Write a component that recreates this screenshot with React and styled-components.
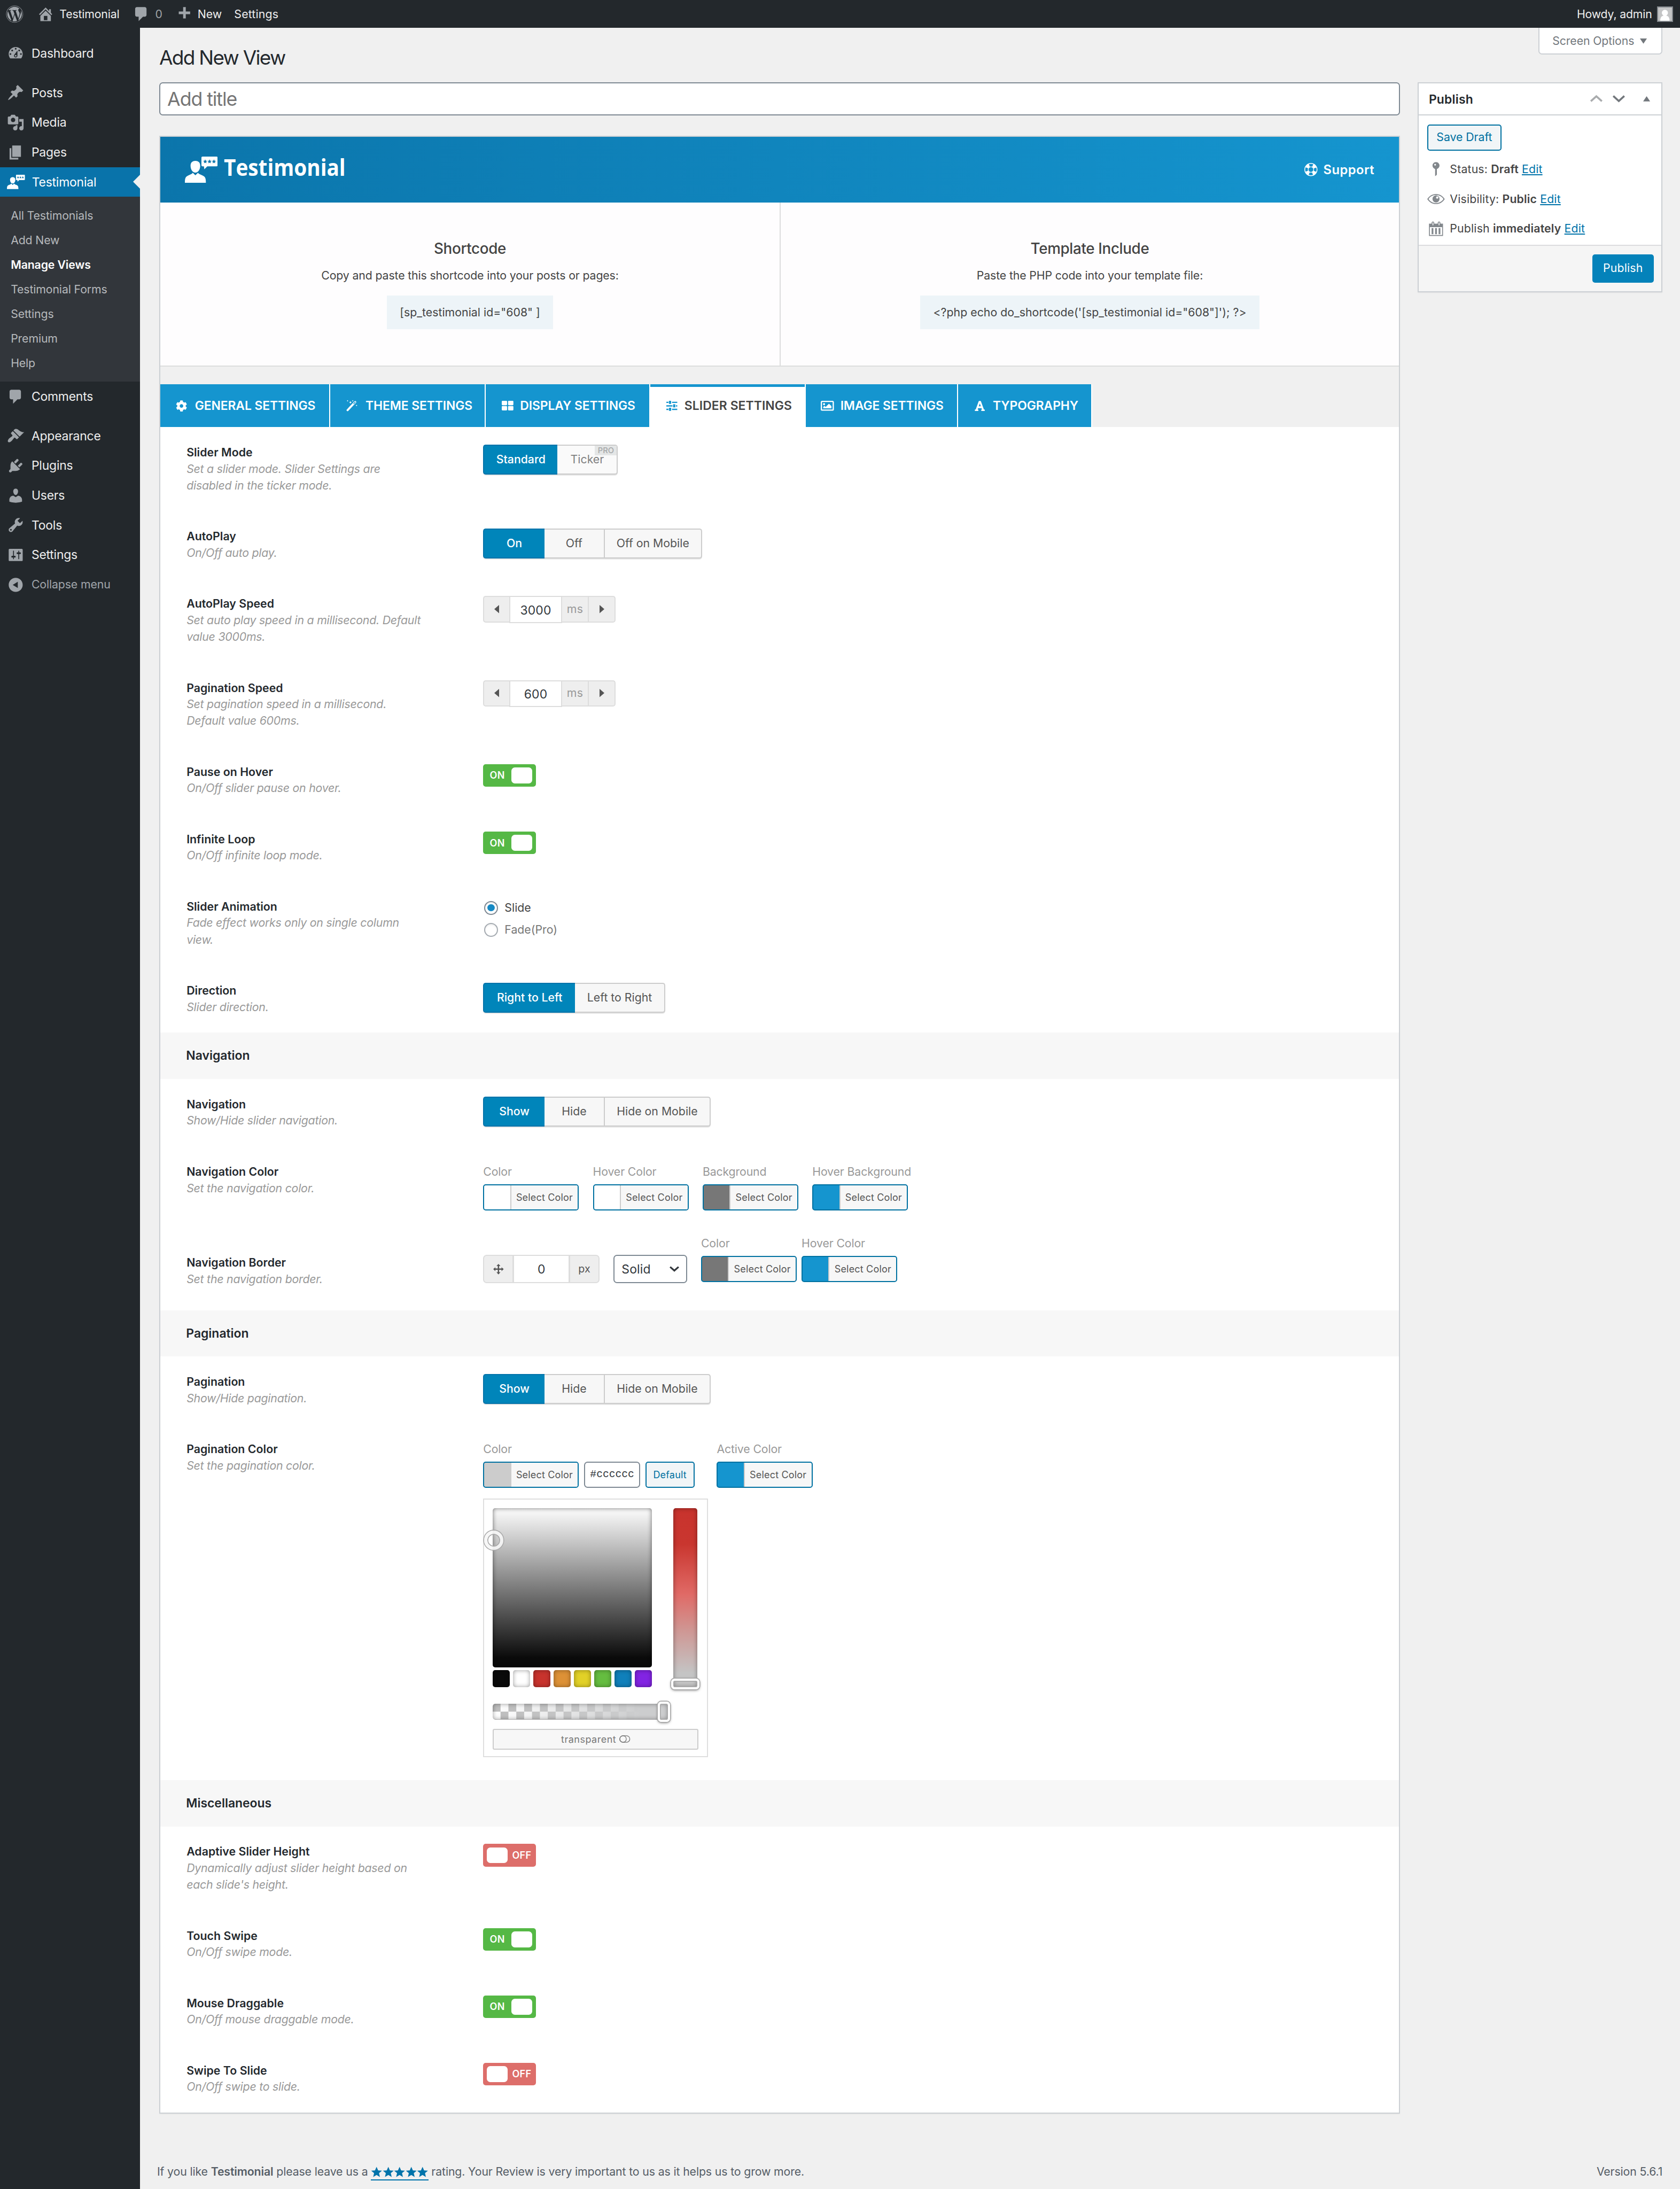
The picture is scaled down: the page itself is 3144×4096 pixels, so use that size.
import React from "react";
import styled, { createGlobalStyle, css } from "styled-components";
import { FaWordpress, FaCog, FaRegImage, FaFont } from "react-icons/fa";

/* 1rem equals ten design pixels at the scale of the admin screen. */
const GlobalStyle = createGlobalStyle`
  html { font-size: 16.375px; }
  *, *::before, *::after { box-sizing: border-box; }
  body {
    margin: 0;
    background: #f0f0f0;
    color: #444;
    font-family: Inter, "Liberation Sans", sans-serif;
    font-size: 1.3rem;
    line-height: 1.4;
    letter-spacing: -0.006em;
    overflow: hidden;
  }
  h1, h2, h3, h4, p, ul { margin: 0; padding: 0; font-weight: inherit; font-size: inherit; }
  ul { list-style: none; }
  button, input, select { font: inherit; letter-spacing: inherit; }
  svg { display: block; }
`;

const line = "0.125rem solid";

/* ---------- icons ---------- */

const paths = {
  home: "M16 8.5l1.53 1.53-1.06 1.06L10 4.6l-6.47 6.49-1.06-1.06L10 2.5l4 4v-2h2v4zm-6-2.46l6 5.99V18H4v-5.97zM12 17v-5H8v5h4z",
  comment: "M5 2h9c1.1 0 2 .9 2 2v7c0 1.1-.9 2-2 2h-2l-5 5v-5H5c-1.1 0-2-.9-2-2V4c0-1.1.9-2 2-2z",
  plus: "M17 7v3h-5v5H9v-5H4V7h5V2h3v5h5z",
  dashboard:
    "M3.76 16h12.48c1.1-1.37 1.76-3.11 1.76-5 0-4.42-3.58-8-8-8s-8 3.58-8 8c0 1.89.66 3.63 1.76 5zM10 4c.55 0 1 .45 1 1s-.45 1-1 1-1-.45-1-1 .45-1 1-1zM6 6c.55 0 1 .45 1 1s-.45 1-1 1-1-.45-1-1 .45-1 1-1zm8 0c.55 0 1 .45 1 1s-.45 1-1 1-1-.45-1-1 .45-1 1-1zm-5.37 5.55L12 7v6c0 1.1-.9 2-2 2s-2-.9-2-2c0-.57.24-1.08.63-1.45zM4 10c.55 0 1 .45 1 1s-.45 1-1 1-1-.45-1-1 .45-1 1-1zm12 0c.55 0 1 .45 1 1s-.45 1-1 1-1-.45-1-1 .45-1 1-1zm-5 3c0-.55-.45-1-1-1s-1 .45-1 1 .45 1 1 1 1-.45 1-1z",
  post: "M10.44 3.02l1.82-1.82 6.36 6.35-1.83 1.82c-1.05-.68-2.48-.57-3.41.36l-.75.75c-.92.93-1.04 2.35-.35 3.41l-1.83 1.82-2.41-2.41-2.8 2.79c-.42.42-3.38 2.71-3.8 2.29s1.86-3.39 2.28-3.81l2.79-2.79L4.1 9.36l1.83-1.82c1.05.69 2.48.57 3.4-.36l.75-.75c.93-.92 1.05-2.35.36-3.41z",
  media:
    "M13 11V4c0-.55-.45-1-1-1h-1.67L9 1H5L3.67 3H2c-.55 0-1 .45-1 1v7c0 .55.45 1 1 1h10c.55 0 1-.45 1-1zM7 4.5c1.38 0 2.5 1.12 2.5 2.5S8.38 9.5 7 9.5 4.5 8.38 4.5 7 5.62 4.5 7 4.5zM14 6h5v10.5c0 1.38-1.12 2.5-2.5 2.5S14 17.88 14 16.5s1.12-2.5 2.5-2.5c.17 0 .34.02.5.05V9h-3V6zm-4 8.05V13h2v3.5c0 1.38-1.12 2.5-2.5 2.5S7 17.88 7 16.5 8.12 14 9.5 14c.17 0 .34.02.5.05z",
  page: "M6 15V2h10v13H6zm-1 1h8v2H3V5h2v11z",
  appearance:
    "M14.48 11.06L7.41 3.99l1.5-1.5c.5-.56 2.3-.47 3.51.32 1.21.8 1.43 1.28 2.91 2.1 1.18.64 2.45 1.26 4.45.85zm-.71.71L6.7 4.7 4.93 6.47c-.39.39-.39 1.02 0 1.41l1.06 1.06c.39.39.39 1.03 0 1.42-.6.6-1.43 1.11-2.21 1.69-.35.26-.7.53-1.01.84C1.43 14.23.4 16.08 1.4 17.07c.99 1 2.84-.03 4.18-1.36.31-.31.58-.66.85-1.02.57-.78 1.08-1.61 1.69-2.21.39-.39 1.02-.39 1.41 0l1.06 1.06c.39.39 1.02.39 1.41 0z",
  plugins:
    "M13.11 4.36L9.87 7.6 8 5.73l3.24-3.24c.35-.34 1.05-.2 1.56.32.52.51.66 1.21.31 1.55zm-8 1.77l.91-1.12 9.01 9.01-1.19.84c-.71.71-2.63 1.16-3.82 1.16H6.14L4.9 17.26c-.59.59-1.54.59-2.12 0-.59-.58-.59-1.53 0-2.12l1.24-1.24v-3.88c0-1.13.4-3.19 1.09-3.89zm7.26 3.97l3.24-3.24c.34-.35 1.04-.21 1.55.31.52.51.66 1.21.31 1.55l-3.24 3.25z",
  users:
    "M10 9.25c-2.27 0-2.73-3.44-2.73-3.44C7 4.02 7.82 2 9.97 2c2.16 0 2.98 2.02 2.71 3.81 0 0-.41 3.44-2.68 3.44zm0 2.57L12.72 10c2.39 0 4.52 2.33 4.52 4.53v2.49s-3.65 1.13-7.24 1.13c-3.65 0-7.24-1.13-7.24-1.13v-2.49c0-2.25 1.94-4.48 4.47-4.48z",
  tools:
    "M16.68 9.77c-1.34 1.34-3.3 1.67-4.95.99l-5.41 6.52c-.99.99-2.59.99-3.58 0s-.99-2.59 0-3.57l6.52-5.42c-.68-1.65-.35-3.61.99-4.95 1.28-1.28 3.12-1.62 4.72-1.06l-2.89 2.89 2.82 2.82 2.86-2.87c.53 1.58.18 3.39-1.08 4.65zM3.81 16.21c.4.39 1.04.39 1.43 0 .4-.4.4-1.04 0-1.43-.39-.4-1.03-.4-1.43 0-.39.39-.39 1.03 0 1.43z",
  settings:
    "M18 16V4c0-.55-.45-1-1-1H3c-.55 0-1 .45-1 1v12c0 .55.45 1 1 1h14c.55 0 1-.45 1-1zM8 11h1c.55 0 1 .45 1 1s-.45 1-1 1H8v1.5c0 .28-.22.5-.5.5s-.5-.22-.5-.5V13H6c-.55 0-1-.45-1-1s.45-1 1-1h1V5.5c0-.28.22-.5.5-.5s.5.22.5.5V11zm5-2h-1c-.55 0-1-.45-1-1s.45-1 1-1h1V5.5c0-.28.22-.5.5-.5s.5.22.5.5V7h1c.55 0 1 .45 1 1s-.45 1-1 1h-1v5.5c0 .28-.22.5-.5.5s-.5-.22-.5-.5V9z",
  collapse: "M10 2c4.42 0 8 3.58 8 8s-3.58 8-8 8-8-3.58-8-8 3.58-8 8-8zM12.4 13.6V6.4L6.6 10z",
  status:
    "M14 6c0 1.86-1.28 3.41-3 3.86V16c0 1-2 2-2 2V9.86c-1.72-.45-3-2-3-3.86 0-2.21 1.79-4 4-4s4 1.79 4 4zM8 5c0 .55.45 1 1 1s1-.45 1-1-.45-1-1-1-1 .45-1 1z",
  visibility:
    "M10 4.2C5.8 4.2 2.3 6.5 0 10c2.3 3.5 5.8 5.8 10 5.8s7.7-2.3 10-5.8C17.7 6.5 14.2 4.2 10 4.2zM10 14.6C6.6 14.6 3.5 12.9 1.5 10 3.5 7.1 6.6 5.4 10 5.4s6.5 1.7 8.5 4.6c-2 2.9-5.1 4.6-8.5 4.6zM10 5.8a4 4.1 0 1 0 .01 0zM11.4 7a1.3 1.3 0 1 1-.01 0z",
  calendar:
    "M15 4h3v14H2V4h3V3c0-.83.67-1.5 1.5-1.5S8 2.17 8 3v1h4V3c0-.83.67-1.5 1.5-1.5S15 2.17 15 3v1zM6 3v2.5c0 .28.22.5.5.5s.5-.22.5-.5V3c0-.28-.22-.5-.5-.5S6 2.72 6 3zm7 0v2.5c0 .28.22.5.5.5s.5-.22.5-.5V3c0-.28-.22-.5-.5-.5s-.5.22-.5.5zm4 14V8H3v9h14zM7 16V9H5v7h2zm4 0V9H9v7h2zm4 0V9h-2v7h2z",
};

const DashSvg = styled.svg`
  width: 2rem;
  height: 2rem;
  fill: currentColor;
  flex: none;
`;

const Dash = ({ name }) => (
  <DashSvg viewBox="0 0 20 20">
    <path d={paths[name]} fillRule="evenodd" />
  </DashSvg>
);

const star = "M0-2.4L.7-.8 2.4-.7 1.1.4 1.5 2.1 0 1.2-1.5 2.1-1.1.4-2.4-.7-.7-.8z";

const MarkSvg = styled.svg`
  width: ${(p) => p.$w};
  height: auto;
  flex: none;
`;

const TestimonialMark = ({ width, ink }) => (
  <MarkSvg $w={width} viewBox="0 0 37.5 30">
    <g fill="#fff">
      <path d="M12 4.9c4 0 5.7 2.6 5.5 6.2C17.3 15 15 18.300 12 18.3S6.7 15 6.5 11.1C6.3 7.5 8 4.9 12 4.9z" />
      <path d="M0 30C0 24.500.8 22.7 4.3 21.3 6.8 20.4 8.2 19.8 9 18.5L12 21.3 15 18.5c.8 1.3 2.2 1.9 4.7 2.8C23.2 22.7 24 24.5 24 30z" />
      <path d="M20.2 0h16c.8 0 1.3.5 1.3 1.3v8.500c0 .8-.5 1.3-1.3 1.3H25.6L22.2 14.5 21.8 11.1H20.2c-.8 0-1.3-.5-1.3-1.3V1.300C18.900.5 19.400 0 20.200 0z" />
    </g>
    <g fill={ink}>
      <path d={star} transform="translate(23.2 5.6)" />
      <path d={star} transform="translate(28.2 5.6)" />
      <path d={star} transform="translate(33.2 5.6)" />
    </g>
  </MarkSvg>
);

const SmallSvg = styled.svg`
  width: ${(p) => p.$w}rem;
  height: ${(p) => p.$h}rem;
  flex: none;
  overflow: visible;
`;

const Triangle = ({ dir, w, h }) => {
  const d = {
    down: "M0 0H10L5 10z",
    up: "M0 10H10L5 0z",
    left: "M10 0V10L0 5z",
    right: "M0 0V10L10 5z",
  }[dir];
  return (
    <SmallSvg $w={w} $h={h} viewBox="0 0 10 10" preserveAspectRatio="none" fill="currentColor">
      <path d={d} />
    </SmallSvg>
  );
};

const Chevron = ({ up, w, h, stroke }) => (
  <SmallSvg $w={w} $h={h} viewBox={`0 0 ${w * 10} ${h * 10}`} fill="none" stroke="currentColor" strokeWidth={stroke}>
    <path d={up ? `M.7 ${h * 10 - 1}L${w * 5} 1.3 ${w * 10 - 0.7} ${h * 10 - 1}` : `M.7 1L${w * 5} ${h * 10 - 1.3} ${w * 10 - 0.7} 1`} />
  </SmallSvg>
);

const LifeRing = () => (
  <SmallSvg $w={1.5} $h={1.5} viewBox="0 0 30 30" fill="none" stroke="#fff">
    <circle cx="15" cy="15" r="14" strokeWidth="1.8" />
    <circle cx="15" cy="15" r="6.3" strokeWidth="1.6" />
    <circle cx="15" cy="15" r="10" strokeWidth="8" strokeDasharray="7.85 7.858" strokeDashoffset="-3.93" />
  </SmallSvg>
);

const SlidersIcon = () => (
  <SmallSvg $w={1.25} $h={1.15} viewBox="0 0 25 23" fill="#1595cf">
    <path d="M0 2h5v3H0zM13 2h12v3H13zM6 0h5v7H6zM0 10h14v3H0zM22 10h3v3h-3zM15.5 8h5v7h-5zM0 18h5v3H0zM13 18h12v3H13zM6 16h5v7H6z" />
  </SmallSvg>
);

const WandIcon = () => (
  <SmallSvg $w={1.25} $h={1.25} viewBox="0 0 25 25">
    <path d="M3 22.5L20.500 4" stroke="#fff" strokeWidth="4.6" strokeLinecap="round" />
    <path d="M17 7.800L20.300 4.300" stroke="#1595cf" strokeWidth="1.8" strokeLinecap="round" />
    <g fill="#fff">
      <path d="M9.6 1.600l.9 2.300 2.300.9-2.300.9-.9 2.300-.9-2.300L6.400 4.800l2.300-.9z" />
      <path d="M3-.6l.6 1.300 1.300.6-1.300.6L3 3.200l-.6-1.300-1.300-.6L2.400.7z" />
      <path d="M14.800-.6l.6 1.300 1.300.6-1.300.6-.6 1.300-.6-1.300-1.300-.6 1.300-.6z" />
      <path d="M23.500 10l.6 1.300 1.300.6-1.300.6-.6 1.300-.6-1.300-1.300-.6 1.300-.6z" />
    </g>
  </SmallSvg>
);

const TilesIcon = () => (
  <SmallSvg $w={1.33} $h={1.1} viewBox="0 0 26.6 22" fill="#fff">
    <rect width="12.200" height="10" rx="1.800" />
    <rect x="14.400" width="12.200" height="10" rx="1.800" />
    <rect y="12" width="12.200" height="10" rx="1.800" />
    <rect x="14.400" y="12" width="12.200" height="10" rx="1.800" />
  </SmallSvg>
);

const MoveIcon = () => (
  <SmallSvg $w={1.2} $h={1.2} viewBox="0 0 24 24" fill="currentColor">
    <path d="M12 0l4.500 5h-3v5.500H19v-3l5 4.500-5 4.500v-3h-5.500V19h3L12 24l-4.500-5h3v-5.500H5v3L0 12l5-4.500v3h5.500V5h-3z" />
  </SmallSvg>
);

/* ---------- admin bar ---------- */

const AdminBar = styled.header`
  height: 3.2rem;
  background: #23282c;
  color: #eee;
  display: flex;
  align-items: center;
  padding: 0.05rem 0.8rem 0 0.7rem;
`;

const BarItem = styled.a`
  display: flex;
  align-items: center;
  gap: ${(p) => p.$gap || 0.6}rem;
  margin-left: ${(p) => p.$ml || 0}rem;
  color: ${(p) => (p.$dim ? "#9da1a5" : "#eee")};
  letter-spacing: ${(p) => p.$ls || "-0.008em"};
  svg { color: #a0a5aa; }
`;

const WpLogo = styled(FaWordpress)`
  width: 2rem;
  height: 2rem;
`;

const Spacer = styled.div`
  flex: 1;
`;

const Avatar = styled.svg`
  width: 1.8rem;
  height: 1.8rem;
  border: ${line} #82878c;
  background: #c4c5c6;
`;

/* ---------- side menu ---------- */

const Frame = styled.div`
  width: 192rem;
  height: 100vh;
  display: flex;
  flex-direction: column;
`;

const Body = styled.div`
  flex: 1;
  display: flex;
  min-height: 0;
`;

const Side = styled.nav`
  width: 16rem;
  background: #23282c;
  padding-top: 1.2rem;
  flex: none;
`;

const MenuItem = styled.a`
  position: relative;
  display: flex;
  align-items: center;
  height: 3.4rem;
  padding-left: 0.8rem;
  gap: 0.8rem;
  font-size: 1.4rem;
  margin-top: ${(p) => (p.$apart ? "1.1rem" : 0)};
  color: ${(p) => (p.$dim ? "#a0a5aa" : "#eee")};
  letter-spacing: -0.009em;
  ${(p) => p.$dim && css`font-size: 1.3rem; letter-spacing: -0.006em;`}
  svg { color: #a0a5aa; }
  ${(p) =>
    p.$active &&
    css`
      background: #0973aa;
      color: #fff;
      &::after {
        content: "";
        position: absolute;
        right: 0;
        top: 0.9rem;
        border: 0.8rem solid transparent;
        border-left: 0;
        border-right-color: #f0f0f0;
      }
    `}
`;

const SubMenu = styled.ul`
  background: #32363b;
  padding: 0.7rem 0 0.72rem;
`;

const SubItem = styled.li`
  height: 2.814rem;
  line-height: 2.814rem;
  padding-left: 1.23rem;
  color: ${(p) => (p.$current ? "#fff" : "#b6b9bc")};
  font-weight: ${(p) => (p.$current ? 600 : 400)};
`;

/* ---------- page ---------- */

const Page = styled.div`
  flex: 1;
  display: flex;
  flex-direction: column;
  padding: 0 2rem 0 2.2rem;
`;

const PageTop = styled.div`
  height: 6.2rem;
  display: flex;
  justify-content: space-between;
  align-items: flex-start;
`;

const PageTitle = styled.h1`
  font-size: 2.3rem;
  line-height: 3rem;
  padding-top: 1.85rem;
  color: #23282d;
  letter-spacing: -0.047em;
  font-size: 2.26rem;
`;

const ScreenOptions = styled.button`
  display: flex;
  align-items: center;
  justify-content: space-between;
  width: 14.2rem;
  height: 3rem;
  padding: 0.15rem 1.65rem 0 1.5rem;
  border: ${line} #ccd0d4;
  border-top: 0;
  border-radius: 0 0 0.4rem 0.4rem;
  background: #fff;
  color: #72777c;
`;

const Columns = styled.div`
  display: flex;
  gap: 2rem;
  align-items: flex-start;
`;

const Main = styled.main`
  width: 141.8rem;
`;

const TitleInput = styled.input`
  display: block;
  width: 100%;
  height: 3.8rem;
  border: ${line} #7e8993;
  border-radius: 0.4rem;
  background: #fff;
  padding: 0 0.8rem;
  font-size: 2.18rem;
  letter-spacing: -0.03em;
  &::placeholder { color: #757575; opacity: 1; }
`;

/* ---------- publish box ---------- */

const PublishBox = styled.aside`
  width: 28rem;
  height: 24rem;
  background: #fff;
  border: ${line} #ccd0d4;
  box-shadow: 0 0.1rem 0.1rem rgba(0, 0, 0, 0.04);
  display: flex;
  flex-direction: column;
`;

const BoxHead = styled.div`
  height: 3.68rem;
  border-bottom: ${line} #ccd0d4;
  display: flex;
  align-items: center;
  padding: 0.15rem 1.3rem 0 1.17rem;
  color: #72777c;
`;

const BoxTitle = styled.h2`
  flex: 1;
  font-size: 1.4rem;
  font-weight: 600;
  color: #23282d;
  letter-spacing: 0.009em;
`;

const Handle = styled.span`
  margin-left: ${(p) => p.$ml}rem;
  color: ${(p) => (p.$faint ? "#a9abad" : "#72777c")};
  margin-bottom: 0.2rem;
`;

const BoxBody = styled.div`
  flex: 1;
  padding: 1rem 0.98rem 0;
`;

const OutlineButton = styled.button`
  display: inline-flex;
  align-items: center;
  justify-content: center;
  width: ${(p) => p.$w}rem;
  height: 3rem;
  padding: 0;
  border: ${line} #0071a1;
  border-radius: 0.3rem;
  background: #f1f5f7;
  color: #0071a1;
  font-size: ${(p) => p.$fs || 1.3}rem;
  letter-spacing: ${(p) => (p.$fs ? "0.011em" : "-0.002em")};
`;

const MetaList = styled.ul`
  padding-top: 0.45rem;
`;

const MetaRow = styled.li`
  height: 3.4rem;
  display: flex;
  align-items: center;
  gap: 0.6rem;
  white-space: pre;
  letter-spacing: 0.008em;
  svg { color: #82878c; }
  a { color: #0073aa; text-decoration: underline; text-underline-offset: 0.15rem; }
  b { font-weight: 600; }
`;

const BoxFoot = styled.div`
  height: 5.3rem;
  border-top: ${line} #dcdcde;
  background: #f5f5f5;
  padding: 0.98rem 0.9rem;
  display: flex;
  justify-content: flex-end;
`;

const PrimaryButton = styled.button`
  width: 7rem;
  height: 3.2rem;
  border: 0;
  border-radius: 0.3rem;
  background: #0482ba;
  color: #fff;
  padding: 0;
  letter-spacing: 0.008em;
`;

/* ---------- settings panel ---------- */

const Panel = styled.section`
  margin-top: 2.3rem;
  border: ${line} #ccd0d4;
  background: #fff;
  box-shadow: 0 0.1rem 0.1rem rgba(0, 0, 0, 0.04);
`;

const Banner = styled.div`
  height: 7.5rem;
  display: flex;
  align-items: center;
  justify-content: space-between;
  padding: 0 2.8rem;
  background: linear-gradient(to right, #0b75ab, #1595cf);
  color: #fff;
`;

const Brand = styled.div`
  display: flex;
  align-items: center;
  gap: 0.7rem;
`;

const BrandName = styled.span`
  font-family: "Open Sans", "Noto Sans", sans-serif;
  font-weight: 700;
  font-size: 2.62rem;
  line-height: 3rem;
  margin-bottom: 0.6rem;
  letter-spacing: 0;
  transform: scaleX(0.903);
  transform-origin: 0 50%;
`;

const Support = styled.a`
  display: flex;
  align-items: center;
  gap: 0.7rem;
  font-size: 1.45rem;
  font-weight: 600;
  letter-spacing: 0.02em;
`;

const Includes = styled.div`
  display: grid;
  grid-template-columns: 1fr 1fr;
  height: 18.8rem;
  background: #fefdfe;
  border-bottom: ${line} #dcdddd;
`;

const Include = styled.div`
  display: flex;
  flex-direction: column;
  align-items: center;
  padding-top: 4.1rem;
  & + & { border-left: ${line} #dcdddd; }
`;

const IncludeTitle = styled.h3`
  font-size: 1.7rem;
  font-weight: 500;
  line-height: 2.4rem;
  letter-spacing: -0.013em;
`;

const IncludeText = styled.p`
  line-height: 1.8rem;
  margin-top: 0.98rem;
`;

const Code = styled.div`
  height: 3.8rem;
  line-height: 3.85rem;
  margin-top: 1.4rem;
  padding: 0 1.5rem;
  background: #edf4f8;
  letter-spacing: 0.0014em;
`;

const Tabs = styled.div`
  display: flex;
  background: #f0f0f0;
  padding-top: 2rem;
`;

const Tab = styled.a`
  display: flex;
  align-items: center;
  width: ${(p) => p.$w}rem;
  height: 4.9rem;
  padding-left: ${(p) => p.$pl}rem;
  border-right: ${line} #fff;
  background: ${(p) => (p.$active ? "#fff" : "#1595cf")};
  color: ${(p) => (p.$active ? "#444" : "#fff")};
  font-size: 1.4rem;
  font-weight: 600;
  letter-spacing: ${(p) => (p.$active ? "0.003em" : "-0.005em")};
  white-space: nowrap;
  text-transform: uppercase;
  ${(p) => p.$active && css`box-shadow: inset 0 0.3rem 0 #1595cf;`}
`;

const TabIcon = styled.span`
  display: flex;
  width: ${(p) => p.$w}rem;
  flex: none;
  svg { flex: none; }
`;

const SectionHead = styled.h3`
  height: 5.3rem;
  line-height: 5.3rem;
  padding-left: 2.95rem;
  background: #f7f7f7;
  color: #23282d;
  font-size: 1.4rem;
  font-weight: 600;
  letter-spacing: 0;
`;

const FieldRow = styled.div`
  display: flex;
  align-items: flex-start;
  padding: ${(p) => p.$pad || "2rem 3rem"};
`;

const FieldLabel = styled.div`
  width: 33.9rem;
  flex: none;
  padding-top: ${(p) => p.$drop || 0}rem;
  white-space: nowrap;
`;

const FieldTitle = styled.h4`
  line-height: 1.8rem;
  font-weight: 600;
  color: #23282d;
  letter-spacing: 0.002em;
`;

const FieldDesc = styled.p`
  line-height: 1.9rem;
  font-style: italic;
  color: #999;
  letter-spacing: -0.01em;
`;

function Field({ title, desc, pad, drop, children }) {
  return (
    <FieldRow $pad={pad}>
      <FieldLabel $drop={drop}>
        <FieldTitle>{title}</FieldTitle>
        {desc.map((d) => (
          <FieldDesc key={d}>{d}</FieldDesc>
        ))}
      </FieldLabel>
      {children}
    </FieldRow>
  );
}

const Group = styled.div`
  display: flex;
  height: 3.4rem;
`;

const GroupButton = styled.button`
  position: relative;
  width: ${(p) => p.$w}rem;
  padding: 0;
  border: ${line} #ccc;
  border-left-width: 0;
  background: ${(p) => (p.$muted ? "#fafafa" : "#f7f7f7")};
  color: ${(p) => (p.$muted ? "#808080" : "#555")};
  box-shadow: 0 0.1rem 0 #e2e2e2;
  letter-spacing: 0;
  &:last-child { border-radius: 0 0.3rem 0.3rem 0; }
  ${(p) =>
    p.$on &&
    css`
      background: #0085ba;
      border-color: #0073aa;
      border-left-width: 0.125rem;
      color: #fff;
      font-weight: 500;
      border-radius: 0.3rem 0 0 0.3rem;
      border-right-width: 0;
    `}
`;

const ProBadge = styled.span`
  position: absolute;
  top: 0;
  right: 0;
  width: 2.5rem;
  height: 1.1rem;
  line-height: 1.15rem;
  background: #e4e6e6;
  color: #a5a7a8;
  font-size: 0.9rem;
  font-weight: 500;
  text-align: center;
`;

function ButtonGroup({ items }) {
  return (
    <Group>
      {items.map(([text, w, pro], i) => (
        <GroupButton key={text} $w={w} $on={i === 0} $muted={pro}>
          {text}
          {pro && <ProBadge>PRO</ProBadge>}
        </GroupButton>
      ))}
    </Group>
  );
}

const Spin = styled.div`
  display: flex;
  height: 3rem;
`;

const SpinPart = styled.span`
  display: flex;
  align-items: center;
  justify-content: center;
  width: ${(p) => p.$w}rem;
  border: ${line} #ddd;
  background: #eee;
  color: ${(p) => (p.$unit ? "#999" : "#555")};
  letter-spacing: 0.02em;
  border-left-width: ${(p) => (p.$first ? "0.125rem" : 0)};
  border-right-width: ${(p) => (p.$first ? 0 : "0.125rem")};
  border-radius: ${(p) => (p.$first ? "0.3rem 0 0 0.3rem" : p.$last ? "0 0.3rem 0.3rem 0" : 0)};
`;

const SpinValue = styled.span`
  display: flex;
  align-items: center;
  justify-content: center;
  width: 6rem;
  height: 3.1rem;
  padding-top: 0.1rem;
  border: ${line} #ddd;
  background: #fff;
  color: #32373c;
  font-size: 1.4rem;
  letter-spacing: 0.008em;
`;

function Spinner({ value }) {
  return (
    <Spin>
      <SpinPart $w={3} $first>
        <Triangle dir="left" w={0.55} h={0.95} />
      </SpinPart>
      <SpinValue>{value}</SpinValue>
      <SpinPart $w={3.1} $unit>
        ms
      </SpinPart>
      <SpinPart $w={3.05} $last>
        <Triangle dir="right" w={0.55} h={0.95} />
      </SpinPart>
    </Spin>
  );
}

const Switch = styled.span`
  display: flex;
  align-items: center;
  justify-content: space-between;
  flex-direction: ${(p) => (p.$on ? "row" : "row-reverse")};
  width: 6rem;
  height: 2.6rem;
  padding: ${(p) => (p.$on ? "0 0.4rem 0 0.75rem" : "0 0.5rem 0 0.4rem")};
  border-radius: 0.3rem;
  background: ${(p) => (p.$on ? "#55b845" : "#dd6e6a")};
  color: #fff;
  font-size: 1.1rem;
  font-weight: 600;
  letter-spacing: 0.015em;
`;

const Knob = styled.i`
  width: 2.4rem;
  height: 1.8rem;
  border-radius: 0.4rem;
  background: #fff;
`;

const Toggle = ({ on }) => (
  <Switch $on={on}>
    {on ? "ON" : "OFF"}
    <Knob />
  </Switch>
);

const Radios = styled.div`
  display: flex;
  flex-direction: column;
  gap: 0.5rem;
  padding: 0.03rem 0 0 0.1rem;
`;

const RadioRow = styled.label`
  display: flex;
  align-items: center;
  gap: 0.75rem;
  height: 2rem;
  color: ${(p) => (p.$off ? "#777" : "#444")};
  letter-spacing: 0;
`;

const Radio = styled.i`
  display: grid;
  place-items: center;
  width: 1.6rem;
  height: 1.6rem;
  border: ${line} ${(p) => (p.$on ? "#7e8993" : "#a5abb1")};
  border-radius: 50%;
  background: #fff;
  box-shadow: inset 0 0.1rem 0.2rem rgba(0, 0, 0, 0.08);
  &::after {
    content: "";
    width: 0.8rem;
    height: 0.8rem;
    border-radius: 50%;
    background: ${(p) => (p.$on ? "#1689c4" : "transparent")};
  }
`;

/* ---------- colour fields ---------- */

const ColorSet = styled.div`
  display: flex;
  align-items: flex-start;
  gap: ${(p) => p.$gap}rem;
`;

const ColorBox = styled.div`
  display: flex;
  flex-direction: column;
  gap: 0.5rem;
  width: ${(p) => p.$w || 10.94}rem;
  white-space: nowrap;
`;

const ColorLabel = styled.span`
  line-height: 1.8rem;
  color: #999;
`;

const ColorButton = styled.button`
  display: flex;
  width: 10.94rem;
  height: 3rem;
  padding: 0;
  border: ${line} #0071a1;
  border-radius: 0.3rem;
  background: ${(p) => p.$c};
  overflow: hidden;
  flex: none;
`;

const ColorText = styled.span`
  flex: 1;
  margin-left: 2.95rem;
  border-left: ${line} #ccc;
  background: #f7f7f7;
  color: #555;
  font-size: 1.1rem;
  line-height: 2.78rem;
  text-align: center;
  letter-spacing: 0.01em;
`;

const SelectColor = ({ color }) => (
  <ColorButton $c={color}>
    <ColorText>Select Color</ColorText>
  </ColorButton>
);

const ColorField = ({ label, color }) => (
  <ColorBox>
    <ColorLabel>{label}</ColorLabel>
    <SelectColor color={color} />
  </ColorBox>
);

const BorderSet = styled.div`
  display: flex;
  align-items: flex-end;
`;

const BorderInput = styled.div`
  display: flex;
  width: 13.3rem;
  height: 3.2rem;
  margin-bottom: -0.1rem;
  border: ${line} #ddd;
  border-radius: 0.4rem;
  background: #eee;
  overflow: hidden;
  align-items: stretch;
`;

const Addon = styled.span`
  flex: 1;
  display: flex;
  align-items: center;
  justify-content: center;
  color: #555;
  font-size: 1.2rem;
  letter-spacing: 0.01em;
`;

const BorderValue = styled.span`
  width: 6.6rem;
  display: flex;
  align-items: center;
  justify-content: center;
  background: #fff;
  border: 0 solid #ddd;
  border-width: 0 0.19rem;
  color: #32373c;
  font-size: 1.4rem;
`;

const Select = styled.div`
  display: flex;
  align-items: center;
  justify-content: space-between;
  width: 8.4rem;
  height: 3.2rem;
  margin: 0 1.6rem -0.1rem;
  padding: 0 0.75rem 0 0.8rem;
  border: ${line} #7e8993;
  border-radius: 0.4rem;
  color: #32373c;
  font-size: 1.4rem;
  letter-spacing: 0.008em;
`;

const PickerBar = styled.div`
  display: flex;
  gap: 0.6rem;
`;

const HexInput = styled.span`
  width: 6.4rem;
  height: 3rem;
  border: ${line} #7e8993;
  border-radius: 0.4rem;
  color: #32373c;
  font-family: "Liberation Mono", monospace;
  font-size: 1.2rem;
  letter-spacing: 0;
  line-height: 2.75rem;
  text-align: center;
`;

const Picker = styled.div`
  width: 25.7rem;
  height: 29.6rem;
  margin-top: 0.7rem;
  border: ${line} #dfdfdf;
  background: #fff;
  padding: 0.98rem;
`;

const PickerTop = styled.div`
  display: flex;
  justify-content: space-between;
  width: 23.4rem;
`;

const Square = styled.div`
  position: relative;
  width: 18.2rem;
  height: 18.2rem;
  border-radius: 0.3rem;
  background: linear-gradient(to bottom, #fdfdfd 0%, #0a0a0a 94%, #0a0a0a 100%);
  box-shadow: inset 0 0 0.5rem rgba(0, 0, 0, 0.55);
`;

const Ring = styled.i`
  position: absolute;
  left: -1rem;
  top: 2.6rem;
  width: 2.2rem;
  height: 2.2rem;
  border-radius: 50%;
  border: 0.42rem solid rgba(246, 246, 246, 0.9);
  box-shadow: 0 0 0 0.1rem #aaa, inset 0 0 0 0.1rem #aaa;
`;

const Swatches = styled.div`
  display: flex;
  justify-content: space-between;
  margin-top: 0.3rem;
`;

const Swatch = styled.i`
  width: 1.95rem;
  height: 2rem;
  border-radius: 0.3rem;
  background: ${(p) => p.$c};
  box-shadow: inset 0 0 0.5rem rgba(0, 0, 0, 0.4);
`;

const Strip = styled.div`
  position: relative;
  width: 2.8rem;
  height: 20.5rem;
  border-radius: 0.3rem;
  background: linear-gradient(to bottom, #c8332d 0%, #c9362f 20%, #e06a66 48%, #cf9693 68%, #c4c4c4 92%, #c4c4c4 100%);
  box-shadow: inset 0 0 0.5rem rgba(0, 0, 0, 0.4);
`;

const HandleBox = styled.i`
  position: absolute;
  border: 0.3rem solid #fff;
  border-radius: 0.4rem;
  box-shadow: 0 0 0 0.1rem #aaa, 0 0.1rem 0.3rem rgba(0, 0, 0, 0.5), inset 0 0 0 0.1rem #aaa;
  ${(p) =>
    p.$wide
      ? css`left: -0.2rem; bottom: -0.25rem; width: 3.2rem; height: 1.25rem;`
      : css`right: -0.25rem; top: -0.25rem; width: 1.4rem; height: 2.3rem;`}
`;

const Alpha = styled.div`
  position: relative;
  width: 20rem;
  height: 1.8rem;
  margin-top: 1.9rem;
  border-radius: 0.3rem;
  box-shadow: inset 0 0 0.5rem rgba(0, 0, 0, 0.4);
  background: linear-gradient(to right, rgba(204, 205, 206, 0), #cccdce 84%),
    repeating-conic-gradient(#fff 0 25%, #bdbdbd 0 50%) 0 0 / 1.8rem 1.8rem;
`;

const TransparentButton = styled.button`
  display: flex;
  align-items: center;
  justify-content: center;
  gap: 0.35rem;
  width: 23.5rem;
  height: 2.35rem;
  margin-top: 1.05rem;
  padding: 0;
  border: ${line} #ccc;
  border-radius: 0.2rem;
  background: #f7f7f7;
  color: #777;
  font-size: 1.1rem;
  letter-spacing: 0.027em;
`;

const PillIcon = () => (
  <SmallSvg $w={1.25} $h={0.85} viewBox="0 0 25 17" fill="none" stroke="currentColor" strokeWidth="1.6">
    <rect x="1" y="1" width="23" height="15" rx="7.5" />
    <circle cx="8.5" cy="8.5" r="7.5" />
  </SmallSvg>
);

const swatches = ["#0a0a0a", "#ffffff", "#c8332d", "#dd9136", "#e2d127", "#65bd40", "#1080bb", "#8224e3"];

/* ---------- footer ---------- */

const Footer = styled.footer`
  display: flex;
  justify-content: space-between;
  margin-top: auto;
  margin-left: -0.25rem;
  height: 2.9rem;
  color: #555d66;
  b { font-weight: 600; }
`;

const Stars = styled.a`
  display: inline-flex;
  align-items: center;
  height: 1.7rem;
  vertical-align: -0.3rem;
  color: #0073aa;
  border-bottom: ${line} #0073aa;
  svg { width: 1.31rem; height: 1.3rem; }
`;

const tabs = [
  ["General Settings", 19.4, 1.8, 2.15, <FaCog size="1.3rem" />],
  ["Theme Settings", 17.8, 1.85, 2.2, <WandIcon />],
  ["Display Settings", 18.8, 1.8, 2.12, <TilesIcon />],
  ["Slider Settings", 17.8, 1.82, 2.08, <SlidersIcon />],
  ["Image Settings", 17.4, 1.7, 2.22, <FaRegImage size="1.5rem" />],
  ["Typography", 15.3, 1.8, 2.15, <FaFont size="1.3rem" />],
];

const menuTop = [
  ["dashboard", "Dashboard"],
  ["post", "Posts", true],
  ["media", "Media"],
  ["page", "Pages"],
];

const subItems = ["All Testimonials", "Add New", "Manage Views", "Testimonial Forms", "Settings", "Premium", "Help"];

const menuBottom = [
  ["comment", "Comments"],
  ["appearance", "Appearance", true],
  ["plugins", "Plugins"],
  ["users", "Users"],
  ["tools", "Tools"],
  ["settings", "Settings"],
];

const MenuLinks = ({ items }) =>
  items.map(([icon, text, apart]) => (
    <MenuItem key={text} $apart={apart}>
      <Dash name={icon} />
      {text}
    </MenuItem>
  ));

export default function App() {
  return (
    <Frame>
      <GlobalStyle />
      <AdminBar>
        <BarItem>
          <WpLogo />
        </BarItem>
        <BarItem $ml={1.5}>
          <Dash name="home" />
          Testimonial
        </BarItem>
        <BarItem $ml={1.53} $dim $gap={0.56}>
          <Dash name="comment" />0
        </BarItem>
        <BarItem $ml={1.5} $gap={0.54} $ls="0">
          <Dash name="plus" />
          New
        </BarItem>
        <BarItem $ml={1.41} $ls="0.009em">
          Settings
        </BarItem>
        <Spacer />
        <BarItem $gap={0.6}>
          Howdy, admin
          <Avatar viewBox="0 0 16 16">
            <circle cx="8" cy="6.3" r="3.6" fill="#fff" />
            <path d="M2.5 16c0-5 2-6.5 5.5-6.5s5.5 1.5 5.5 6.5z" fill="#fff" />
          </Avatar>
        </BarItem>
      </AdminBar>
      <Body>
        <Side>
          <MenuLinks items={menuTop} />
          <MenuItem $active>
            <TestimonialMark width="2.05rem" ink="#0973aa" />
            Testimonial
          </MenuItem>
          <SubMenu>
            {subItems.map((t) => (
              <SubItem key={t} $current={t === "Manage Views"}>
                {t}
              </SubItem>
            ))}
          </SubMenu>
          <MenuLinks items={menuBottom} />
          <MenuItem $dim>
            <Dash name="collapse" />
            Collapse menu
          </MenuItem>
        </Side>

        <Page>
          <PageTop>
            <PageTitle>Add New View</PageTitle>
            <ScreenOptions>
              Screen Options <Triangle dir="down" w={0.8} h={0.6} />
            </ScreenOptions>
          </PageTop>

          <Columns>
            <Main>
              <TitleInput placeholder="Add title" />
              <Panel>
                <Banner>
                  <Brand>
                    <TestimonialMark width="3.75rem" ink="#0d77ad" />
                    <BrandName>Testimonial</BrandName>
                  </Brand>
                  <Support>
                    <LifeRing />
                    Support
                  </Support>
                </Banner>
                <Includes>
                  <Include>
                    <IncludeTitle>Shortcode</IncludeTitle>
                    <IncludeText>Copy and paste this shortcode into your posts or pages:</IncludeText>
                    <Code>[sp_testimonial id="608" ]</Code>
                  </Include>
                  <Include>
                    <IncludeTitle>Template Include</IncludeTitle>
                    <IncludeText>Paste the PHP code into your template file:</IncludeText>
                    <Code>{"<?php echo do_shortcode('[sp_testimonial id=\"608\"]'); ?>"}</Code>
                  </Include>
                </Includes>
                <Tabs>
                  {tabs.map(([text, w, pl, iw, icon]) => (
                    <Tab key={text} $w={w} $pl={pl} $active={text === "Slider Settings"}>
                      <TabIcon $w={iw}>{icon}</TabIcon>
                      {text}
                    </Tab>
                  ))}
                </Tabs>

                <Field title="Slider Mode" desc={["Set a slider mode. Slider Settings are", "disabled in the ticker mode."]}>
                  <ButtonGroup items={[["Standard", 8.5], ["Ticker", 6.9, true]]} />
                </Field>
                <Field title="AutoPlay" desc={["On/Off auto play."]}>
                  <ButtonGroup items={[["On", 7], ["Off", 6.9], ["Off on Mobile", 11.1]]} />
                </Field>
                <Field title="AutoPlay Speed" desc={["Set auto play speed in a millisecond. Default", "value 3000ms."]}>
                  <Spinner value="3000" />
                </Field>
                <Field title="Pagination Speed" desc={["Set pagination speed in a millisecond.", "Default value 600ms."]}>
                  <Spinner value="600" />
                </Field>
                <Field title="Pause on Hover" desc={["On/Off slider pause on hover."]}>
                  <Toggle on />
                </Field>
                <Field title="Infinite Loop" desc={["On/Off infinite loop mode."]}>
                  <Toggle on />
                </Field>
                <Field title="Slider Animation" desc={["Fade effect works only on single column", "view."]}>
                  <Radios>
                    <RadioRow>
                      <Radio $on />
                      Slide
                    </RadioRow>
                    <RadioRow $off>
                      <Radio />
                      Fade(Pro)
                    </RadioRow>
                  </Radios>
                </Field>
                <Field title="Direction" desc={["Slider direction."]}>
                  <ButtonGroup items={[["Right to Left", 10.5], ["Left to Right", 10.3]]} />
                </Field>

                <SectionHead>Navigation</SectionHead>
                <Field title="Navigation" desc={["Show/Hide slider navigation."]}>
                  <ButtonGroup items={[["Show", 7], ["Hide", 6.9], ["Hide on Mobile", 12.1]]} />
                </Field>
                <Field title="Navigation Color" desc={["Set the navigation color."]}>
                  <ColorSet $gap={1.6}>
                    <ColorField label="Color" color="#ffffff" />
                    <ColorField label="Hover Color" color="#ffffff" />
                    <ColorField label="Background" color="#777777" />
                    <ColorField label="Hover Background" color="#1595cf" />
                  </ColorSet>
                </Field>
                <Field title="Navigation Border" desc={["Set the navigation border."]} pad="0.9rem 3rem 2.6rem" drop={2.2}>
                  <BorderSet>
                    <BorderInput>
                      <Addon>
                        <MoveIcon />
                      </Addon>
                      <BorderValue>0</BorderValue>
                      <Addon>px</Addon>
                    </BorderInput>
                    <Select>
                      Solid
                      <Chevron w={1.1} h={0.65} stroke={2} />
                    </Select>
                    <ColorSet $gap={0.55}>
                      <ColorField label="Color" color="#777777" />
                      <ColorField label="Hover Color" color="#1595cf" />
                    </ColorSet>
                  </BorderSet>
                </Field>

                <SectionHead>Pagination</SectionHead>
                <Field title="Pagination" desc={["Show/Hide pagination."]}>
                  <ButtonGroup items={[["Show", 7], ["Hide", 6.9], ["Hide on Mobile", 12.1]]} />
                </Field>
                <Field title="Pagination Color" desc={["Set the pagination color."]} pad="2rem 3rem 2.6rem">
                  <ColorSet $gap={1}>
                    <ColorBox $w={25.7}>
                      <ColorLabel>Color</ColorLabel>
                      <PickerBar>
                        <SelectColor color="#cccccc" />
                        <HexInput>#cccccc</HexInput>
                        <OutlineButton $w={5.6} $fs={1.1}>
                          Default
                        </OutlineButton>
                      </PickerBar>
                      <Picker>
                        <PickerTop>
                          <div>
                            <Square>
                              <Ring />
                            </Square>
                            <Swatches>
                              {swatches.map((c) => (
                                <Swatch key={c} $c={c} />
                              ))}
                            </Swatches>
                          </div>
                          <Strip>
                            <HandleBox $wide />
                          </Strip>
                        </PickerTop>
                        <Alpha>
                          <HandleBox />
                        </Alpha>
                        <TransparentButton>
                          transparent
                          <PillIcon />
                        </TransparentButton>
                      </Picker>
                    </ColorBox>
                    <ColorField label="Active Color" color="#1595cf" />
                  </ColorSet>
                </Field>

                <SectionHead>Miscellaneous</SectionHead>
                <Field title="Adaptive Slider Height" desc={["Dynamically adjust slider height based on", "each slide's height."]}>
                  <Toggle />
                </Field>
                <Field title="Touch Swipe" desc={["On/Off swipe mode."]}>
                  <Toggle on />
                </Field>
                <Field title="Mouse Draggable" desc={["On/Off mouse draggable mode."]}>
                  <Toggle on />
                </Field>
                <Field title="Swipe To Slide" desc={["On/Off swipe to slide."]}>
                  <Toggle />
                </Field>
              </Panel>
            </Main>

            <PublishBox>
              <BoxHead>
                <BoxTitle>Publish</BoxTitle>
                <Handle $faint $ml={0}>
                  <Chevron up w={1.4} h={0.8} stroke={2.2} />
                </Handle>
                <Handle $ml={1.2}>
                  <Chevron w={1.4} h={0.8} stroke={2.2} />
                </Handle>
                <Handle $ml={2.05}>
                  <Triangle dir="up" w={0.8} h={0.6} />
                </Handle>
              </BoxHead>
              <BoxBody>
                <OutlineButton $w={8.5}>Save Draft</OutlineButton>
                <MetaList>
                  <MetaRow>
                    <Dash name="status" />
                    <span>
                      Status: <b>Draft</b> <a>Edit</a>
                    </span>
                  </MetaRow>
                  <MetaRow>
                    <Dash name="visibility" />
                    <span>
                      Visibility: <b>Public</b> <a>Edit</a>
                    </span>
                  </MetaRow>
                  <MetaRow>
                    <Dash name="calendar" />
                    <span>
                      Publish <b>immediately</b> <a>Edit</a>
                    </span>
                  </MetaRow>
                </MetaList>
              </BoxBody>
              <BoxFoot>
                <PrimaryButton>Publish</PrimaryButton>
              </BoxFoot>
            </PublishBox>
          </Columns>

          <Footer>
            <span>
              If you like <b>Testimonial</b> please leave us a{" "}
              <Stars>
                {[1, 2, 3, 4, 5].map((n) => (
                  <svg key={n} viewBox="-2.55 -2.5 5.1 5" fill="currentColor">
                    <path d={star} />
                  </svg>
                ))}
              </Stars>{" "}
              rating. Your Review is very important to us as it helps us to grow more.
            </span>
            <span>Version 5.6.1</span>
          </Footer>
        </Page>
      </Body>
    </Frame>
  );
}
